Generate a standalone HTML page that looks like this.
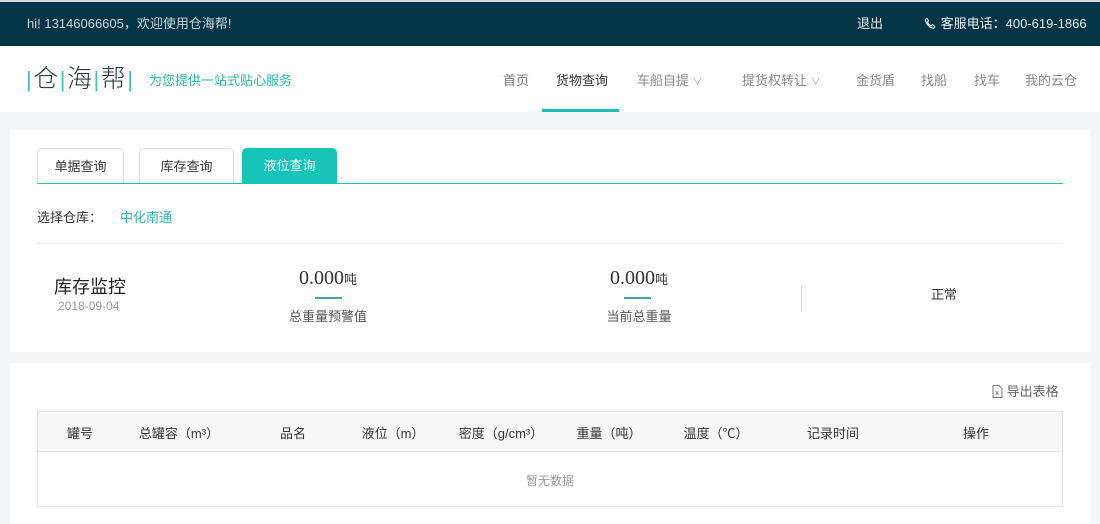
<!DOCTYPE html>
<html><head><meta charset="utf-8"><style>
*{margin:0;padding:0;box-sizing:border-box}
body{width:1100px;height:524px;overflow:hidden;background:#f4f5f7;font-family:"Liberation Sans","Noto Sans CJK SC",sans-serif;font-size:13px;color:#333;position:relative}
.a{position:absolute;white-space:nowrap}
.c{transform:translateX(-50%)}
</style></head><body>
<div class="a" style="left:0;top:0;width:1100px;height:2px;background:#d8dcdf"></div>
<div class="a" style="left:0;top:2px;width:1100px;height:44px;background:#043546"></div>
<div class="a" style="left:27px;top:13px;color:#c9d6dc">hi! 13146066605，欢迎使用仓海帮!</div>
<div class="a" style="left:857px;top:13px;color:#e6eef1">退出</div>
<div class="a" style="left:924px;top:13px;color:#e6eef1"><svg width="13" height="13" viewBox="0 0 14 14" style="vertical-align:-2px"><path d="M3 1.5l2 2.5-1.3 1.5c.8 1.8 2.3 3.3 4 4l1.5-1.3 2.5 2-1.2 2C6 11.5 2.5 8 1.3 3z" fill="none" stroke="#e6eef1" stroke-width="1.2"/></svg> 客服电话：400-619-1866</div>
<div class="a" style="left:0;top:46px;width:1100px;height:66px;background:#fff"></div>
<div class="a" style="left:26px;top:64px;font-size:25px;color:#2b3e44;line-height:30px;font-weight:300;letter-spacing:1.5px"><span style="color:#3cc6bb;font-size:22px">|</span>仓<span style="color:#3cc6bb;font-size:22px">|</span>海<span style="color:#3cc6bb;font-size:22px">|</span>帮<span style="color:#3cc6bb;font-size:22px">|</span></div>
<div class="a" style="left:149px;top:70px;color:#27b5ac">为您提供一站式贴心服务</div>
<div class="a" style="left:503px;top:70px;color:#777">首页</div>
<div class="a" style="left:556px;top:70px;color:#333">货物查询</div>
<div class="a" style="left:542px;top:109px;width:77px;height:3px;background:#1dbdb3"></div>
<div class="a" style="left:637px;top:70px;color:#888">车船自提 <span style="font-size:10px;color:#aaa">∨</span></div>
<div class="a" style="left:742px;top:70px;color:#888">提货权转让 <span style="font-size:10px;color:#aaa">∨</span></div>
<div class="a" style="left:856px;top:70px;color:#888">金货盾</div>
<div class="a" style="left:921px;top:70px;color:#888">找船</div>
<div class="a" style="left:974px;top:70px;color:#888">找车</div>
<div class="a" style="left:1025px;top:70px;color:#888">我的云仓</div>

<div class="a" style="left:10px;top:130px;width:1080px;height:222px;background:#fff"></div>
<div class="a" style="left:37px;top:148px;width:87px;height:36px;border:1px solid #ddd;border-bottom:none;border-radius:5px 5px 0 0;text-align:center;line-height:36px">单据查询</div>
<div class="a" style="left:139px;top:148px;width:95px;height:36px;border:1px solid #ddd;border-bottom:none;border-radius:5px 5px 0 0;text-align:center;line-height:36px">库存查询</div>
<div class="a" style="left:242px;top:148px;width:95px;height:36px;background:#16c4b8;color:#fff;border-radius:5px 5px 0 0;text-align:center;line-height:36px">液位查询</div>
<div class="a" style="left:37px;top:183px;width:1026px;height:1px;background:#16c4b8"></div>
<div class="a" style="left:37px;top:207px">选择仓库：</div>
<div class="a" style="left:120px;top:207px;color:#27b5ac">中化南通</div>
<div class="a" style="left:37px;top:243px;width:1026px;height:1px;background:#ececec"></div>
<div class="a" style="left:54px;top:273px;font-size:18px;color:#222">库存监控</div>
<div class="a" style="left:58px;top:299px;color:#999;font-size:12px">2018-09-04</div>
<div class="a c" style="left:328px;top:267px;font-family:'Liberation Serif',serif;font-size:20px;color:#333">0.000<span style="font-size:13px;font-family:'Noto Sans CJK SC',sans-serif">吨</span></div>
<div class="a" style="left:315px;top:297px;width:27px;height:2px;background:#3fa9a4"></div>
<div class="a c" style="left:328px;top:306px;color:#555">总重量预警值</div>
<div class="a c" style="left:639px;top:267px;font-family:'Liberation Serif',serif;font-size:20px;color:#333">0.000<span style="font-size:13px;font-family:'Noto Sans CJK SC',sans-serif">吨</span></div>
<div class="a" style="left:624px;top:297px;width:27px;height:2px;background:#3fa9a4"></div>
<div class="a c" style="left:639px;top:306px;color:#555">当前总重量</div>
<div class="a" style="left:801px;top:285px;width:1px;height:27px;background:#ddd"></div>
<div class="a c" style="left:944px;top:284px;color:#333">正常</div>

<div class="a" style="left:10px;top:363px;width:1080px;height:161px;background:#fff"></div>
<div class="a" style="left:992px;top:381px;color:#666"><svg width="11" height="13" viewBox="0 0 11 13" style="vertical-align:-2px"><path d="M1 .5h6l3 3v9H1z" fill="none" stroke="#777"/><path d="M3.5 6l3 4M6.5 6l-3 4" stroke="#777" stroke-width=".8"/></svg> 导出表格</div>
<div class="a" style="left:37px;top:411px;width:1026px;height:96px;border:1px solid #e3e3e3"></div>
<div class="a" style="left:38px;top:412px;width:1024px;height:40px;background:#f7f7f7;border-bottom:1px solid #e3e3e3"></div>
<div class="a c" style="left:80px;top:423px">罐号</div>
<div class="a c" style="left:179px;top:423px">总罐容（m³）</div>
<div class="a c" style="left:293px;top:423px">品名</div>
<div class="a c" style="left:393px;top:423px">液位（m）</div>
<div class="a c" style="left:501px;top:423px">密度（g/cm³）</div>
<div class="a c" style="left:609px;top:423px">重量（吨）</div>
<div class="a c" style="left:716px;top:423px">温度（℃）</div>
<div class="a c" style="left:833px;top:423px">记录时间</div>
<div class="a c" style="left:976px;top:423px">操作</div>
<div class="a c" style="left:550px;top:472px;color:#999;font-size:12px">暂无数据</div>
</body></html>
